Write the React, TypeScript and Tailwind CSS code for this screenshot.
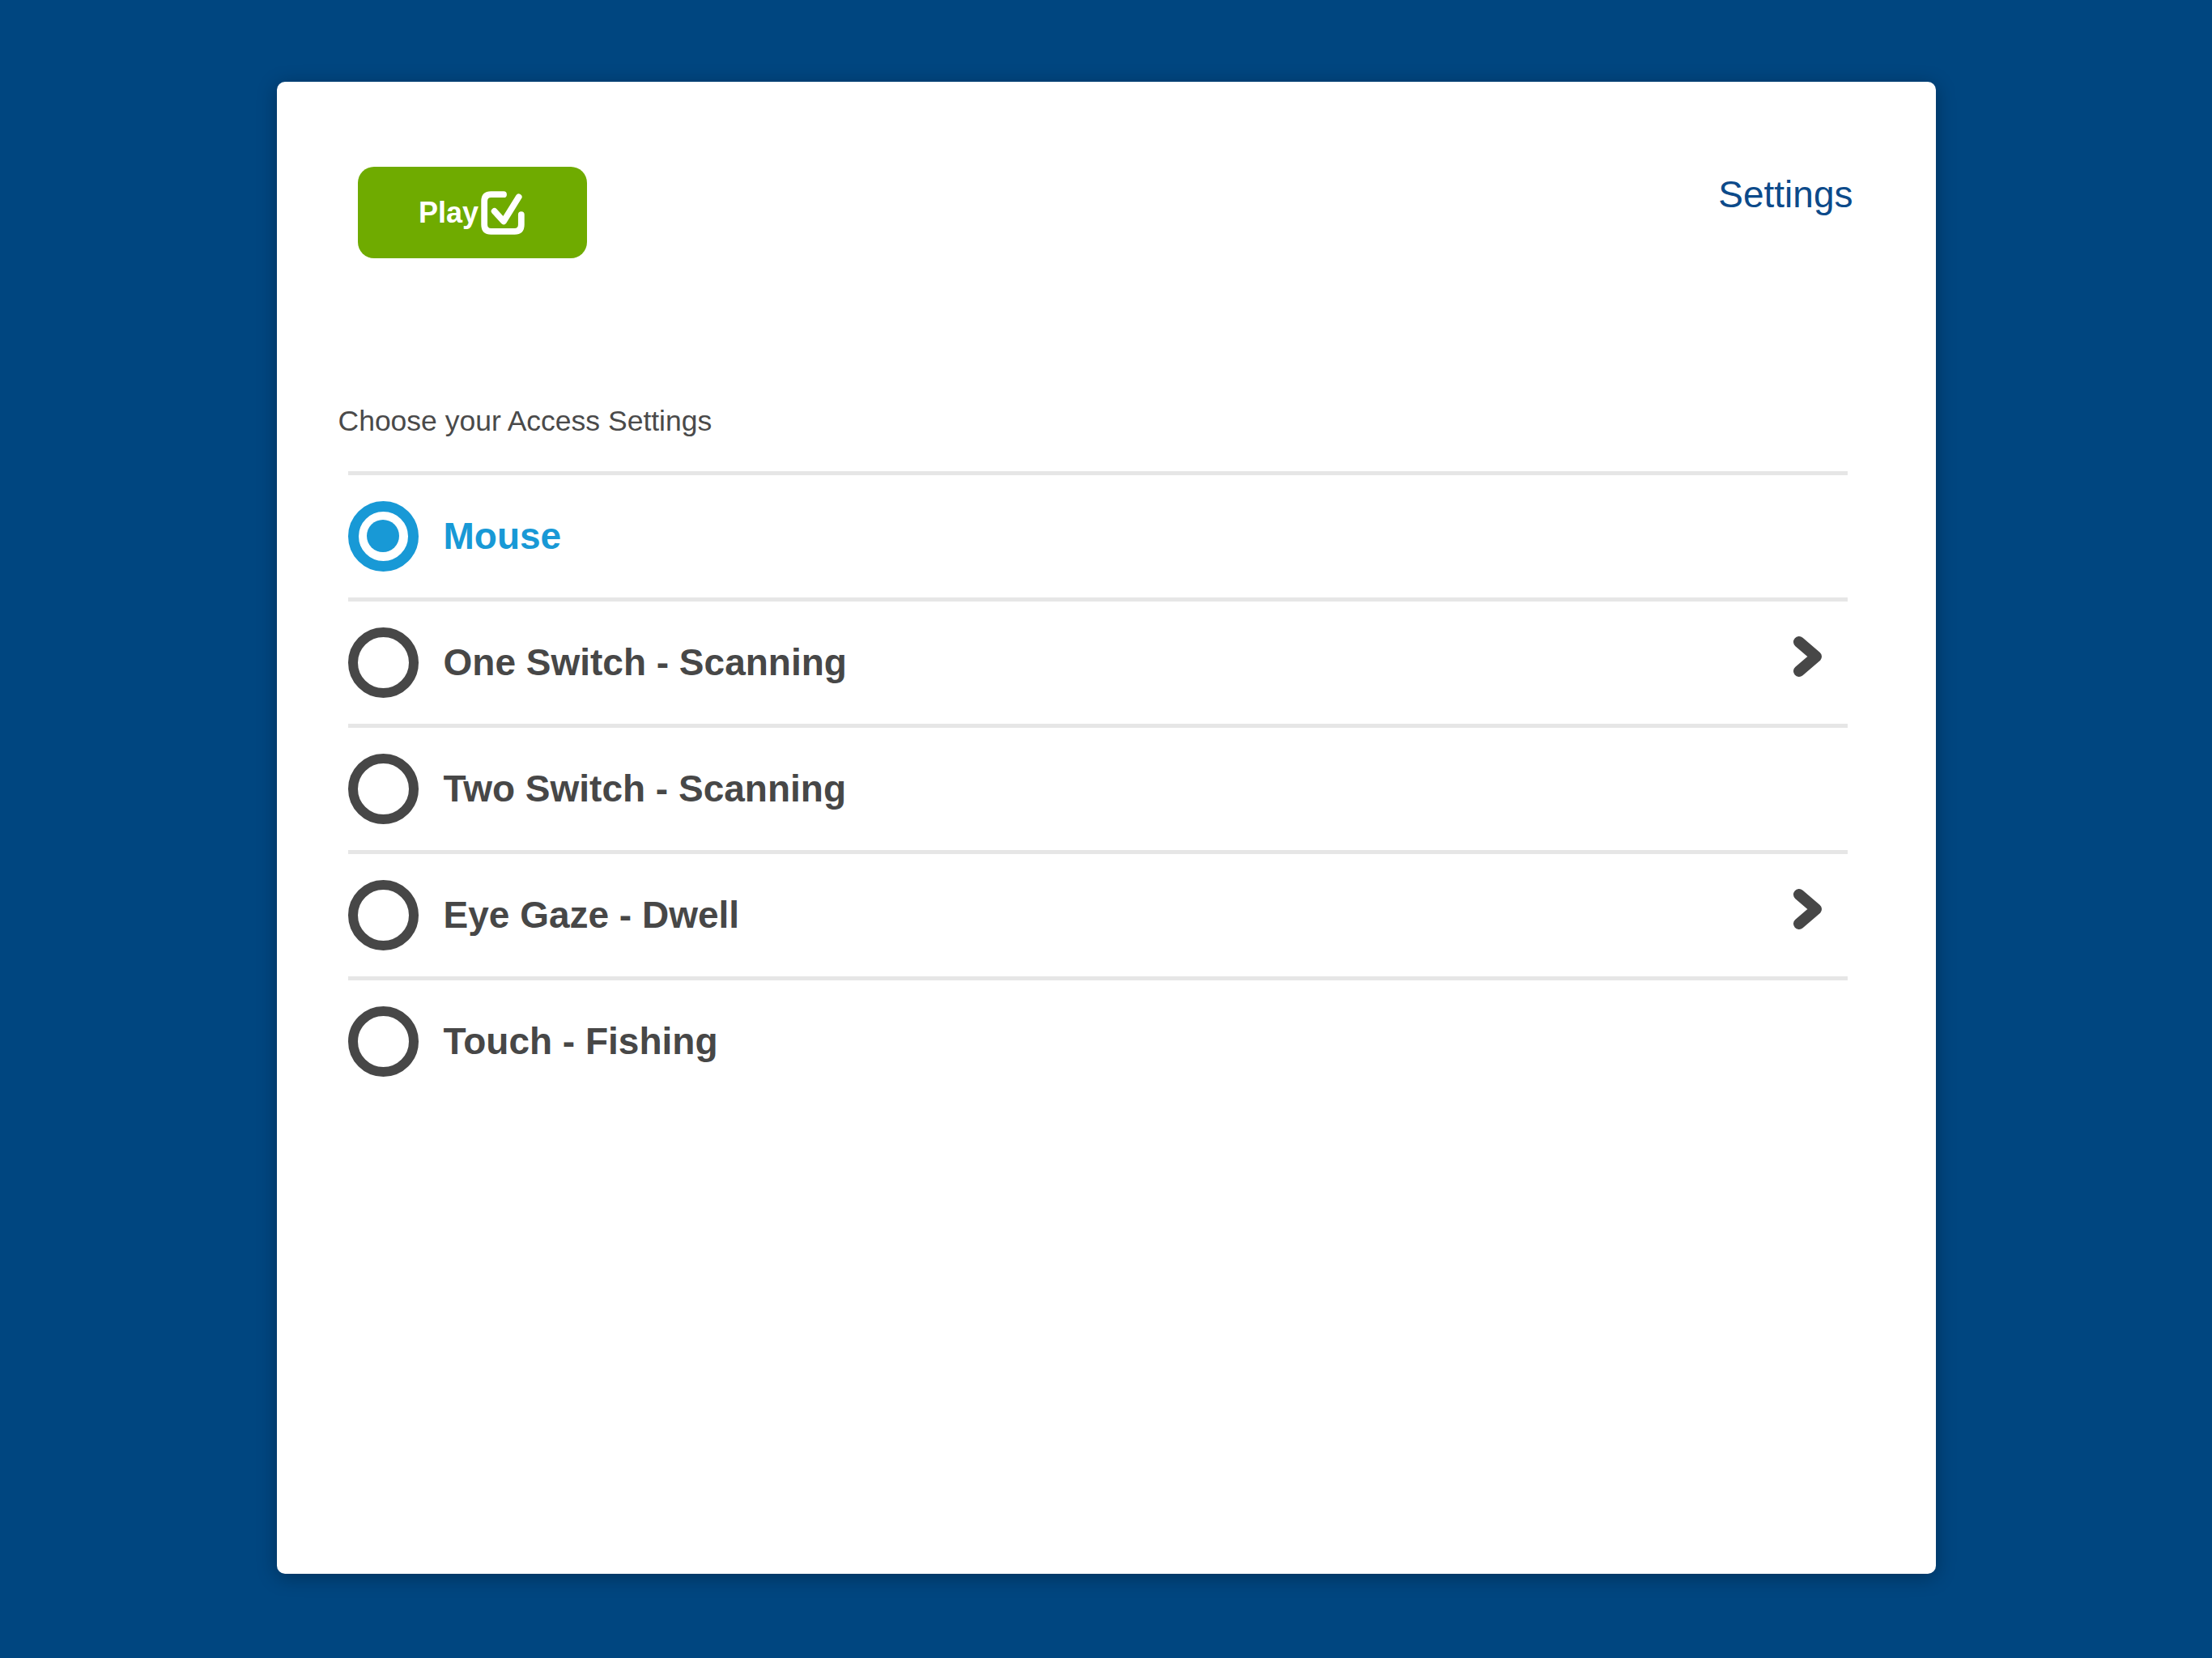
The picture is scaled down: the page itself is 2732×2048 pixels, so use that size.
import React, { useState } from 'react';

const options = [
  { id: 'mouse', label: 'Mouse', more: false },
  { id: 'one-switch', label: 'One Switch - Scanning', more: true },
  { id: 'two-switch', label: 'Two Switch - Scanning', more: false },
  { id: 'eye-gaze', label: 'Eye Gaze - Dwell', more: true },
  { id: 'touch', label: 'Touch - Fishing', more: false },
];

function PlayLogo() {
  return (
    <svg width="56" height="56" viewBox="0 0 54 54" fill="none" stroke="white" strokeWidth="7.5" strokeLinecap="round" strokeLinejoin="round">
      <path d="M28 5 H13 Q5 5 5 13 V41 Q5 49 13 49 H41 Q49 49 49 41 V29" />
      <path d="M17 25 L28 37 L46 8" />
    </svg>
  );
}

function Chevron() {
  return (
    <svg width="38" height="52" viewBox="0 0 38 52" fill="none" stroke="#474747" strokeWidth="14" strokeLinecap="round" strokeLinejoin="round">
      <path d="M8 8 L29 26 L8 44" />
    </svg>
  );
}

export default function App() {
  const [selected, setSelected] = useState('mouse');

  return (
    <div className="min-h-screen w-full bg-[#004680] flex justify-center pt-[101px] font-['Liberation_Sans',Arial,sans-serif]">
      <div className="w-[2049px] h-[1843px] bg-white rounded-[10px] shadow-[0_4px_24px_rgba(0,0,0,0.3)] flex flex-col">
        {/* header */}
        <div className="flex items-start justify-between pl-[100px] pr-[102px] pt-[105px]">
          <button className="w-[283px] h-[113px] bg-[#6fab00] rounded-[20px] flex items-center justify-center gap-[2px]">
            <span className="text-white font-bold text-[36px] leading-none">Play</span>
            <PlayLogo />
          </button>
          <a className="mt-[11px] text-[46px] leading-none text-[#0c4a8a] cursor-pointer">Settings</a>
        </div>

        <p className="ml-[76px] mt-[184px] text-[35.5px] leading-none text-[#4a4a4a]">Choose your Access Settings</p>

        {/* options */}
        <div className="ml-[88px] mr-[109px] mt-[43px] flex flex-col">
          {options.map((opt) => {
            const active = selected === opt.id;
            return (
              <div
                key={opt.id}
                onClick={() => setSelected(opt.id)}
                className="h-[156px] flex items-center cursor-pointer border-t-[5px] border-[#e6e6e6]"
              >
                {active ? (
                  <div className="w-[87px] h-[87px] rounded-full border-[13px] border-[#1899d6] flex items-center justify-center shrink-0">
                    <div className="w-[40px] h-[40px] rounded-full bg-[#1899d6]"></div>
                  </div>
                ) : (
                  <div className="w-[87px] h-[87px] rounded-full border-[12px] border-[#474747] shrink-0"></div>
                )}
                <span className={`ml-[31px] text-[46px] font-bold leading-none ${active ? 'text-[#1899d6]' : 'text-[#474747]'}`}>
                  {opt.label}
                </span>
                {opt.more && (
                  <div className="ml-auto mr-[30px] mb-[14px]">
                    <Chevron />
                  </div>
                )}
              </div>
            );
          })}
        </div>
      </div>
    </div>
  );
}
